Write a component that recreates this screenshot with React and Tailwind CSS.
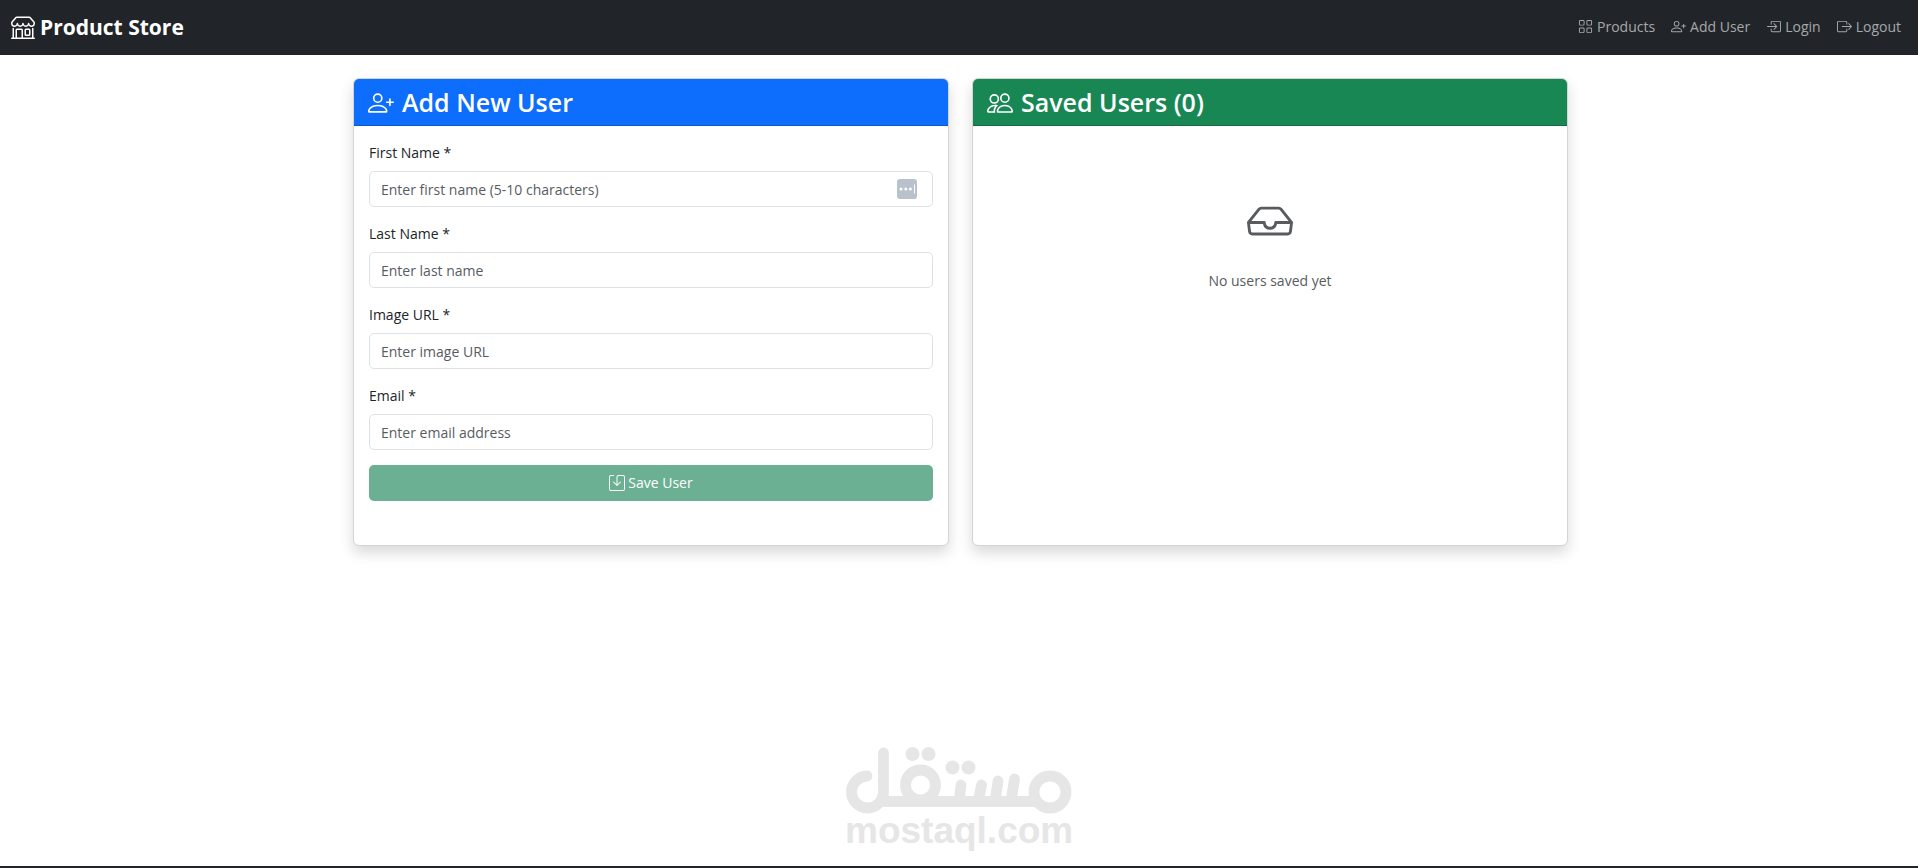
import React from "react";
import {
  BsShop,
  BsGrid,
  BsPersonPlus,
  BsBoxArrowInRight,
  BsBoxArrowRight,
  BsPeople,
  BsInbox,
  BsSave,
} from "react-icons/bs";

const navLinks = [
  { label: "Products", href: "#products", Icon: BsGrid },
  { label: "Add User", href: "#add-user", Icon: BsPersonPlus },
  { label: "Login", href: "#login", Icon: BsBoxArrowInRight },
  { label: "Logout", href: "#logout", Icon: BsBoxArrowRight },
];

const fields = [
  { id: "firstName", label: "First Name *", type: "text", placeholder: "Enter first name (5-10 characters)", autofill: true },
  { id: "lastName", label: "Last Name *", type: "text", placeholder: "Enter last name" },
  { id: "imageUrl", label: "Image URL *", type: "url", placeholder: "Enter image URL" },
  { id: "email", label: "Email *", type: "email", placeholder: "Enter email address" },
];

function Navbar() {
  return (
    <nav className="flex h-[55px] items-center justify-between bg-[#212529] pr-[17px] pb-[2px] pl-[11px]">
      <a href="#home" className="flex items-center gap-[5px] text-[21px] font-bold text-white">
        <BsShop className="size-6" />
        Product Store
      </a>
      <ul className="flex items-center gap-4 text-sm text-[#a6a8a9]">
        {navLinks.map(({ label, href, Icon }) => (
          <li key={href}>
            <a href={href} className="flex items-center gap-1">
              <Icon className="size-[15px]" />
              {label}
            </a>
          </li>
        ))}
      </ul>
    </nav>
  );
}

function AutofillBadge() {
  return (
    <svg viewBox="0 0 20 20" className="absolute top-2 right-4 size-5" aria-hidden="true">
      <rect width="20" height="20" rx="3" fill="#b7c2cc" />
      <circle cx="4" cy="10" r="1.5" fill="#fff" />
      <circle cx="8.8" cy="10" r="1.5" fill="#fff" />
      <circle cx="13.4" cy="10" r="1.5" fill="#fff" />
      <rect x="17" y="5.5" width="1" height="9" fill="#fff" />
    </svg>
  );
}

function Field({ id, label, type, placeholder, autofill }) {
  return (
    <div className="mb-[15px]">
      <label htmlFor={id} className="mb-[7px] block leading-[23px]">
        {label}
      </label>
      <div className="relative">
        <input
          id={id}
          type={type}
          placeholder={placeholder}
          className="block h-[36px] w-full rounded-[5px] border border-[#dee2e6] bg-white px-[11px] placeholder:text-[#595c5f] outline-none"
        />
        {autofill && <AutofillBadge />}
      </div>
    </div>
  );
}

function Card({ tone, title, Icon, children }) {
  return (
    <section className="flex min-h-[468px] flex-col rounded-md border border-[#d3d4d4] bg-white shadow-[0_7px_14px_rgba(0,0,0,0.15)]">
      <h2 className={`flex h-[47px] items-center gap-2 rounded-t-[5px] border-b border-black/20 px-[14px] pt-0.5 text-[25px] font-semibold text-white ${tone}`}>
        <Icon className="size-[26px]" />
        {title}
      </h2>
      {children}
    </section>
  );
}

function Watermark() {
  return (
    <div className="mx-auto mb-5 w-[228px] text-[#e6e6e6]">
      <svg viewBox="0 0 228 68" className="block w-full" role="img" aria-label="مستقل">
        <g fill="none" stroke="currentColor" strokeWidth="10.8" strokeLinecap="round" strokeLinejoin="round">
          <path d="M22 29A16 16 0 1 0 38.500 45V6" />
          <path d="M40 54.500H190" />
          <circle cx="75.500" cy="38" r="15" />
          <path d="M116 38L114.500 51M136.500 38L134 51M153 34L150.500 51M169.500 32L166.500 51" />
          <circle cx="205" cy="45" r="16" />
        </g>
        <g fill="currentColor">
          <circle cx="67.500" cy="7" r="7" />
          <circle cx="83.500" cy="7" r="7" />
          <circle cx="107.500" cy="20.500" r="7" />
          <circle cx="123.500" cy="20.500" r="7" />
        </g>
      </svg>
      <p className="text-center font-['Liberation_Sans',Arial,sans-serif] text-[37px] leading-[31px] font-bold">mostaql.com</p>
    </div>
  );
}

export default function App() {
  return (
    <div className="flex min-h-screen flex-col bg-white font-['Open_Sans','Noto_Sans',sans-serif] text-sm text-[#212529]">
      <Navbar />
      <main className="mx-auto grid w-full max-w-[1218px] flex-1 grid-cols-2 content-start gap-[23px] pt-[23px] pl-[3px]">
        <Card tone="bg-[#0d6efd]" title="Add New User" Icon={BsPersonPlus}>
          <form className="p-[15px]" onSubmit={(e) => e.preventDefault()}>
            {fields.map((field) => (
              <Field key={field.id} {...field} />
            ))}
            <button
              type="submit"
              disabled
              className="flex h-[36px] w-full items-center justify-center gap-[3px] rounded-[5px] bg-[#6bb092] text-white"
            >
              <BsSave className="size-4" />
              Save User
            </button>
          </form>
        </Card>
        <Card tone="bg-[#198754]" title="Saved Users (0)" Icon={BsPeople}>
          <div className="flex flex-col items-center pt-[72px] text-[#595c5f]">
            <BsInbox className="size-[46px]" />
            <p className="mt-[26px] leading-[22px]">No users saved yet</p>
          </div>
        </Card>
      </main>
      <Watermark />
      <footer className="h-0.5 bg-[#212529]" />
    </div>
  );
}
